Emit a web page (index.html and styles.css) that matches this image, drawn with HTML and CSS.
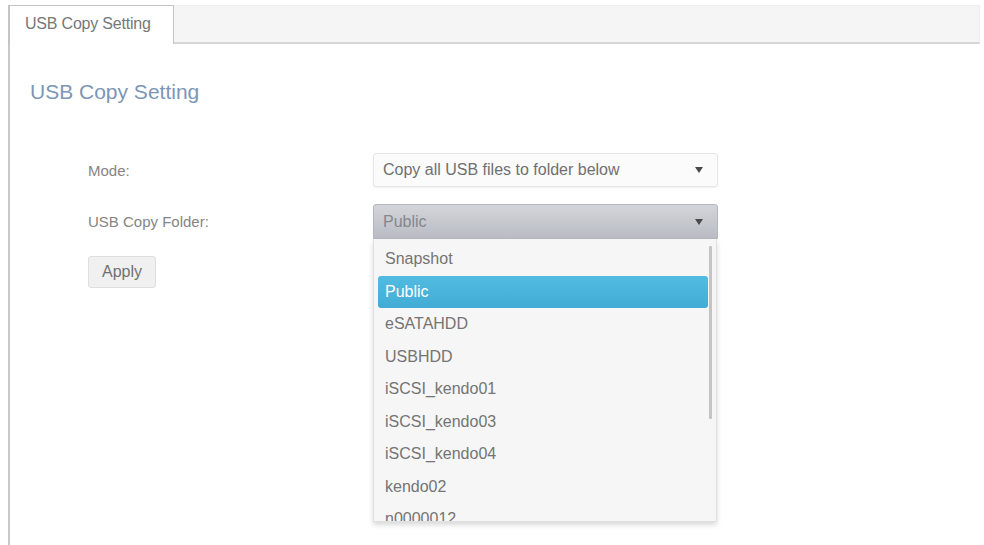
FILE: index.html
```html
<!DOCTYPE html>
<html>
<head>
<meta charset="utf-8">
<link rel="stylesheet" href="styles.css">
</head>
<body>
<div class="page">
  <div class="tabbar">
    <div class="tab">USB Copy Setting</div>
  </div>
  <div class="panel">
    <h1 class="heading">USB Copy Setting</h1>
    <div class="form">
      <div class="row">
        <div class="label">Mode:</div>
        <div class="select">
          <span>Copy all USB files to folder below</span>
          <span class="arrow"></span>
        </div>
      </div>
      <div class="row">
        <div class="label">USB Copy Folder:</div>
        <div class="select-wrap">
          <div class="select open">
            <span>Public</span>
            <span class="arrow"></span>
          </div>
          <div class="menu">
            <div class="items">
              <div class="item">Snapshot</div>
              <div class="item active">Public</div>
              <div class="item">eSATAHDD</div>
              <div class="item">USBHDD</div>
              <div class="item">iSCSI_kendo01</div>
              <div class="item">iSCSI_kendo03</div>
              <div class="item">iSCSI_kendo04</div>
              <div class="item">kendo02</div>
              <div class="item">n0000012</div>
            </div>
            <div class="track"><div class="thumb"></div></div>
          </div>
        </div>
      </div>
      <div class="row">
        <button class="apply">Apply</button>
      </div>
    </div>
  </div>
</div>
</body>
</html>
```
FILE: styles.css
```css
html, body {
  margin: 0;
  padding: 0;
  background: #fff;
  font-family: "Liberation Sans", Arial, sans-serif;
  overflow: hidden;
}
.page {
  padding: 5px 4px 0 8px;
  height: 540px;
  display: flex;
  flex-direction: column;
}
.tabbar {
  display: flex;
  height: 36px;
  background: #f5f5f5;
  border-bottom: 2px solid #d6d6d6;
  border-right: 1px solid #ececec;
  border-top: 1px solid #efefef;
}
.tab {
  width: 148px;
  padding-left: 15px;
  margin-top: -1px;
  margin-bottom: -2px;
  background: #fff;
  border: 1px solid #c4c4c4;
  border-left: 2px solid #c4c4c4;
  border-bottom: none;
  color: #777;
  font-size: 16px;
  line-height: 35px;
  letter-spacing: -0.2px;
}
.panel {
  flex: 1;
  border-left: 2px solid #c8c8c8;
  padding-left: 20px;
}
.heading {
  margin: 36px 0 0 0;
  font-weight: normal;
  font-size: 21px;
  line-height: 24px;
  color: #7b96b6;
}
.form {
  margin-top: 49px;
  padding-left: 58px;
  display: flex;
  flex-direction: column;
  gap: 17px;
}
.row {
  display: flex;
  align-items: center;
}
.label {
  width: 285px;
  font-size: 15px;
  color: #858585;
}
.select-wrap {
  position: relative;
}
.select {
  box-sizing: border-box;
  width: 345px;
  height: 34px;
  display: flex;
  align-items: center;
  justify-content: space-between;
  padding: 0 14px 0 9px;
  border: 1px solid #e6e6e6;
  border-radius: 3px;
  background: #fbfbfb;
  box-shadow: 0 1px 2px rgba(0,0,0,0.06);
  color: #707070;
  font-size: 16px;
}
.select.open {
  height: 35px;
  border-color: #b4b7bd;
  border-radius: 3px 3px 0 0;
  background: linear-gradient(#d3d5da, #b9bcc3);
  color: #85878d;
}
.arrow {
  width: 0;
  height: 0;
  border-left: 4px solid transparent;
  border-right: 4px solid transparent;
  border-top: 6px solid #4a4a4a;
}
.menu {
  position: absolute;
  top: 100%;
  left: 0;
  width: 344px;
  height: 283px;
  box-sizing: border-box;
  background: #f6f6f6;
  border: 1px solid #e0e0e0;
  border-top: none;
  box-shadow: 0 3px 5px rgba(0,0,0,0.15);
  overflow: hidden;
  display: flex;
  padding: 4px 4px 0 4px;
}
.items {
  flex: 1;
  display: flex;
  flex-direction: column;
}
.item {
  height: 32.5px;
  flex: none;
  display: flex;
  align-items: center;
  padding-left: 7px;
  font-size: 16px;
  color: #747474;
  border-radius: 3px;
}
.item.active {
  background: linear-gradient(#52bbe0, #43acd6);
  color: #fff;
}
.track {
  width: 3px;
  margin-left: 1px;
  padding-top: 3px;
}
.thumb {
  width: 3px;
  height: 173px;
  background: #c4c4c4;
  border-radius: 1px;
}
.apply {
  box-sizing: border-box;
  width: 68px;
  height: 32px;
  padding: 0;
  background: #f0f0f0;
  border: 1px solid #dedede;
  border-radius: 3px;
  color: #707070;
  font-family: "Liberation Sans", Arial, sans-serif;
  font-size: 16px;
}
```
